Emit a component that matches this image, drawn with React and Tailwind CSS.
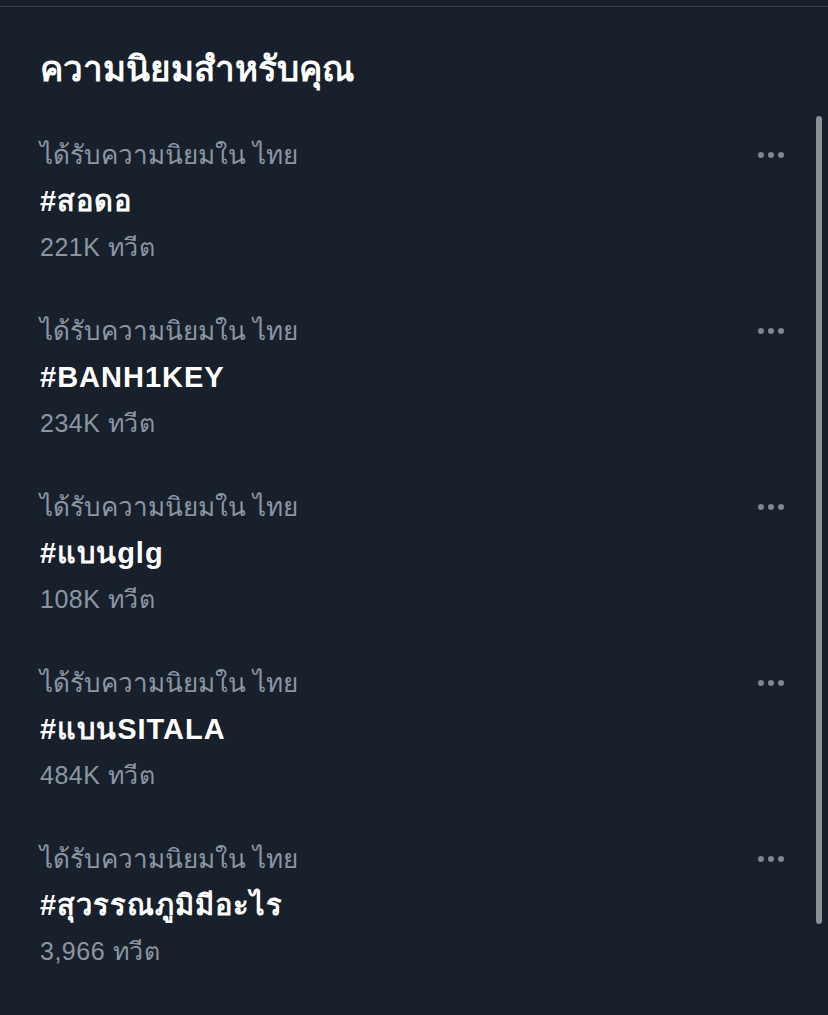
const trends = [
  { tag: '#สอดอ', count: '221K ทวีต' },
  { tag: '#BANH1KEY', count: '234K ทวีต' },
  { tag: '#แบนglg', count: '108K ทวีต' },
  { tag: '#แบนSITALA', count: '484K ทวีต' },
  { tag: '#สุวรรณภูมิมีอะไร', count: '3,966 ทวีต' },
];

function MoreDots() {
  return (
    <div className="flex items-center gap-[4px]">
      <span className="h-[6px] w-[6px] rounded-full bg-[#7f8791]" />
      <span className="h-[6px] w-[6px] rounded-full bg-[#7f8791]" />
      <span className="h-[6px] w-[6px] rounded-full bg-[#7f8791]" />
    </div>
  );
}

export default function App() {
  return (
    <div
      className="relative h-[1015px] w-full overflow-hidden bg-[#18202b]"
      style={{ fontFamily: '"Liberation Sans", "Noto Sans", sans-serif' }}
    >
      <div className="mt-[6px] h-px w-full bg-[#3a414b]" />

      <h1 className="px-[40px] pt-[42px] text-[35px] font-bold leading-[40px] text-white">ความนิยมสำหรับคุณ</h1>

      <div className="mt-[44px] pr-[44px]">
        {trends.map((t) => (
          <div key={t.tag} className="flex h-[176px] items-start justify-between pl-[40px]">
            <div className="flex flex-col">
              <p className="text-[26px] leading-[44px] text-[#8b96a3]">ได้รับความนิยมใน ไทย</p>
              <p className="text-[29px] font-bold leading-[48px] tracking-[1px] text-white">{t.tag}</p>
              <p className="text-[25px] leading-[44px] tracking-[0.5px] text-[#8b96a3]">{t.count}</p>
            </div>
            <div className="pt-[19px]">
              <MoreDots />
            </div>
          </div>
        ))}
      </div>

      <div className="absolute left-[816px] top-[116px] h-[808px] w-[6px] rounded-full bg-[#8a8f96]" />
    </div>
  );
}
